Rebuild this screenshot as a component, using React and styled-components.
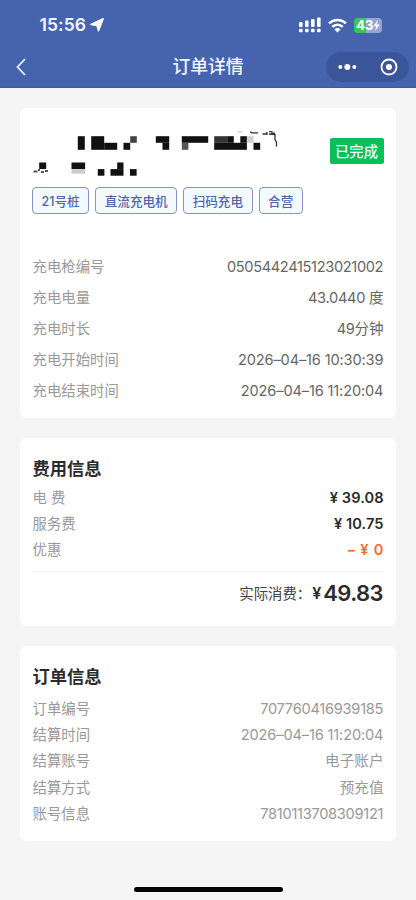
import React from 'react'
import styled, { createGlobalStyle } from 'styled-components'

const GlobalStyle = createGlobalStyle`
    * {
        box-sizing: border-box;
    }

    body {
        margin: 0;
        background-color: #f5f5f5;
        font-family: Inter, 'Noto Sans CJK SC', sans-serif;
    }
`;

const Page = styled.div`
    width: 416px;
    height: 900px;
    display: flex;
    flex-direction: column;
    overflow: hidden;
    background-color: #f5f5f5;
`;

const Header = styled.header`
    height: 88px;
    flex-shrink: 0;
    color: #f3f6ff;
    background-color: #4664ae;
    border-bottom: 1px solid #3c599f;
`;

const StatusBar = styled.div`
    height: 46px;
    padding: 4px 34px 0 39.5px;
    display: flex;
    align-items: center;
    justify-content: space-between;
`;

const StatusGroup = styled.div`
    display: flex;
    align-items: center;
    gap: ${props => props.$gap}px;
`;

const Time = styled.span`
    font-size: 17.5px;
    font-weight: 600;
    line-height: 22px;
    letter-spacing: 0.05px;
`;

const Battery = styled.div`
    width: 28px;
    height: 15px;
    display: flex;
    align-items: center;
    justify-content: center;
    border-radius: 4px;
    font-size: 13.5px;
    font-weight: 700;
    letter-spacing: -0.3px;
    color: #fff;
    background: linear-gradient(to right, #35c759 43%, #93a5d2 43%);
`;

const NavBar = styled.div`
    height: 42px;
    padding: 0 7px;
    display: grid;
    grid-template-columns: 1fr auto 1fr;
    align-items: center;
`;

const BackIcon = styled.svg`
    margin-left: 8px;
`;

const NavTitle = styled.h1`
    margin: 0;
    font-size: 17.8px;
    font-weight: 500;
    line-height: 26px;
`;

const Capsule = styled.div`
    width: 83px;
    height: 30px;
    padding: 0 11px 0 12px;
    display: flex;
    align-items: center;
    justify-content: space-between;
    justify-self: end;
    border-radius: 15px;
    background-color: #3b559b;
`;

const Content = styled.main`
    padding: 20px 20px 0;
    display: flex;
    flex-direction: column;
    gap: 20px;
`;

const Card = styled.section`
    height: ${props => props.$height}px;
    padding: ${props => props.$top}px 12.5px 0;
    border-radius: 7px;
    background-color: #fff;
`;

const Station = styled.div`
    height: 56px;
    display: flex;
    justify-content: space-between;
`;

const Badge = styled.span`
    width: 54px;
    height: 26px;
    margin-top: 7.5px;
    padding-bottom: 1px;
    display: flex;
    align-items: center;
    justify-content: center;
    border-radius: 2px;
    font-size: 14.3px;
    font-weight: 500;
    color: #f2fff6;
    background-color: #07c05a;
`;

const Tags = styled.div`
    margin: 0 0 37.7px -0.5px;
    display: flex;
    gap: 6px;
`;

const Tag = styled.span`
    height: 27px;
    padding: 0 8.5px;
    display: flex;
    align-items: center;
    border: 1.5px solid #8494c6;
    border-radius: 4px;
    font-size: 12.6px;
    font-weight: 500;
    color: #5067ab;
    background-color: #f5faff;
`;

const CardTitle = styled.h2`
    margin: 0 0 ${props => props.$gap}px;
    height: 30px;
    line-height: 30px;
    font-size: 17.3px;
    font-weight: 700;
    color: #2b2b2b;
`;

const Row = styled.div`
    height: ${props => props.$height}px;
    display: flex;
    align-items: center;
    justify-content: space-between;
    white-space: nowrap;
`;

const Label = styled.span`
    font-size: 14.4px;
    line-height: 20px;
    color: #999;
`;

const Value = styled.span`
    font-size: 14.6px;
    line-height: 20px;
    font-weight: ${props => props.$weight || 400};
    letter-spacing: ${props => props.$track || 0}px;
    margin-right: ${props => -(props.$track || 0)}px;
    color: ${props => props.$color || '#666'};
`;

const Divider = styled.div`
    height: 1px;
    margin-top: 7px;
    background-color: #f3f3f3;
`;

const Total = styled.div`
    height: 42px;
    display: flex;
    align-items: center;
    justify-content: flex-end;
`;

const TotalLabel = styled.span`
    font-size: 14.4px;
    color: #444;
`;

const Yen = styled.span`
    margin: 0 2px 0 1px;
    font-size: 16px;
    font-weight: 600;
    color: #2b2b2b;
`;

const Amount = styled.span`
    font-size: 22px;
    font-weight: 600;
    letter-spacing: -0.6px;
    margin-right: 0.6px;
    color: #2b2b2b;
`;

const HomeIndicator = styled.div`
    width: 149px;
    height: 5px;
    margin: auto auto 8px 134px;
    border-radius: 3px;
    background-color: #050505;
`;

const charge = [
    { label: '充电枪编号', value: '0505442415123021002', track: -0.35 },
    { label: '充电电量', value: '43.0440 度', track: -0.3 },
    { label: '充电时长', value: '49分钟', track: -0.3 },
    { label: '充电开始时间', value: '2026–04–16 10:30:39', track: -0.15 },
    { label: '充电结束时间', value: '2026–04–16 11:20:04', track: -0.15 },
]

const fees = [
    { label: '电 费', value: '¥ 39.08', color: '#2b2b2b', track: 0.05 },
    { label: '服务费', value: '¥ 10.75', color: '#2b2b2b', track: 0.05 },
    { label: '优惠', value: '– ¥ 0', color: '#f96a30', track: 0.8 },
]

const order = [
    { label: '订单编号', value: '707760416939185', track: -0.25 },
    { label: '结算时间', value: '2026–04–16 11:20:04', track: -0.15 },
    { label: '结算账号', value: '电子账户' },
    { label: '结算方式', value: '预充值' },
    { label: '账号信息', value: '7810113708309121', track: -0.28 },
]

// [x, y, width, height, colour] of each block hiding the station name
const blocks = [
    [44.8, 7.7, 7, 13.6, '#111'],
    [58.2, 7.7, 13, 13.6, '#111'],
    [71.2, 14.3, 13, 7, '#111'],
    [90.5, 14.3, 6.7, 7, '#111'],
    [97.2, 7.7, 6.6, 6.6, '#444'],
    [122.8, 7.7, 13.4, 6.6, '#111'],
    [129.5, 14.3, 6.7, 7, '#111'],
    [148.8, 7.7, 26.4, 6.6, '#111'],
    [148.8, 14.3, 6.6, 7, '#555'],
    [181.2, 7.7, 13, 6.6, '#333'],
    [194.2, 7.7, 6.6, 6.6, '#111'],
    [207.3, 7.7, 6.6, 6.6, '#111'],
    [181.2, 14.3, 32.7, 7, '#111'],
    [213.9, 7.7, 6.6, 6.6, '#d0d0d0'],
    [220.5, 14.3, 6.7, 7, '#111'],
    [6.2, 34, 7, 6.6, '#111'],
    [38.5, 34, 13.6, 6.6, '#111'],
    [38.5, 40.6, 13.6, 4.6, '#ccc'],
    [64.8, 40.6, 6.6, 6.6, '#111'],
    [77.5, 40.6, 13, 6.6, '#111'],
    [84.2, 34, 6.3, 6.6, '#111'],
    [97, 40.6, 6.6, 6.6, '#111'],
]

const Mosaic = () => (
    <svg width="260" height="56" viewBox="0 2.5 260 56">
        {blocks.map(([x, y, w, h, fill], i) => (
            <rect key={i} x={x} y={y} width={w} height={h} fill={fill} />
        ))}
        <g fill="none" stroke="#333" strokeWidth="1.3">
            <path d="M205 3.2h4" stroke="#ccc" />
            <path d="M217 3.2l2 1.2h6" />
            <path d="M229.5 5.5h5M234 3.5v3M236 3h3.5M236 5.5l6 .5v5l1.5 3v4" />
            <path d="M238 5h4" strokeWidth="2" />
            <path d="M0.5 43h4M5 41.5h2M8 43.5h3M12 42.5h3" strokeWidth="1.8" stroke="#555" />
        </g>
    </svg>
)

const App = () => {
    return (
        <Page>
            <GlobalStyle />
            <Header>
                <StatusBar>
                    <StatusGroup $gap={4}>
                        <Time>15:56</Time>
                        <svg width="14" height="14" viewBox="0 0 14 14" fill="#fff">
                            <path d="M13.2 0.8L8.5 12.8L7 7.6L1 6.4Z" stroke="#fff" strokeWidth="1.5" strokeLinejoin="round" />
                        </svg>
                    </StatusGroup>
                    <StatusGroup $gap={7}>
                        <svg width="22" height="16" viewBox="0 0 22 16" fill="#fff">
                            <rect x="0" y="5" width="3.6" height="5" rx="1" />
                            <rect x="6" y="3.5" width="3.6" height="6.5" rx="1" />
                            <rect x="12" y="2" width="3.6" height="8" rx="1" />
                            <rect x="18" y="0.5" width="3.6" height="9.5" rx="1" />
                            <rect x="0" y="11.8" width="3.6" height="3.5" rx="1" />
                            <rect x="6" y="11.8" width="3.6" height="3.5" rx="1" />
                            <rect x="12" y="11.8" width="3.6" height="3.5" rx="1" />
                            <rect x="18" y="11.8" width="3.6" height="3.5" rx="1" />
                        </svg>
                        <svg width="19" height="15" viewBox="0 0 18 14" fill="none" stroke="#fff" strokeWidth="2.5">
                            <path d="M1 5a11.5 11.5 0 0 1 16 0" />
                            <path d="M4 8.3a7.2 7.2 0 0 1 10 0" />
                            <path d="M6.1 10.7a4 4 0 0 1 5.8 0L9 13.7Z" fill="#fff" stroke="none" />
                        </svg>
                        <Battery>
                            43
                            <svg width="7" height="11" viewBox="0 0 7 11" fill="#fff">
                                <path d="M4.8 0L0.3 6.2H3.2L2.2 11L6.8 4.6H3.9Z" />
                            </svg>
                        </Battery>
                    </StatusGroup>
                </StatusBar>
                <NavBar>
                    <BackIcon width="12" height="18" viewBox="0 0 12 18" fill="none" stroke="#eef3ff" strokeWidth="1.8">
                        <path d="M10 1L2.5 9L10 17" />
                    </BackIcon>
                    <NavTitle>订单详情</NavTitle>
                    <Capsule>
                        <svg width="19" height="8" viewBox="0 0 19 8" fill="#fff">
                            <circle cx="2.3" cy="4" r="2" />
                            <circle cx="9.3" cy="4" r="3" />
                            <circle cx="16.3" cy="4" r="2" />
                        </svg>
                        <svg width="18" height="18" viewBox="0 0 18 18">
                            <circle cx="9" cy="9" r="7.5" fill="none" stroke="#fff" strokeWidth="1.8" />
                            <circle cx="9" cy="9" r="3" fill="#fff" />
                        </svg>
                    </Capsule>
                </NavBar>
            </Header>

            <Content>
                <Card $height={310} $top={22.5}>
                    <Station>
                        <Mosaic />
                        <Badge>已完成</Badge>
                    </Station>
                    <Tags>
                        <Tag>21号桩</Tag>
                        <Tag>直流充电机</Tag>
                        <Tag>扫码充电</Tag>
                        <Tag>合营</Tag>
                    </Tags>
                    {charge.map(item => (
                        <Row key={item.label} $height={31.1}>
                            <Label>{item.label}</Label>
                            <Value $track={item.track}>{item.value}</Value>
                        </Row>
                    ))}
                </Card>

                <Card $height={188} $top={16}>
                    <CardTitle $gap={1}>费用信息</CardTitle>
                    {fees.map(item => (
                        <Row key={item.label} $height={26.2}>
                            <Label>{item.label}</Label>
                            <Value $weight={600} $color={item.color} $track={item.track}>{item.value}</Value>
                        </Row>
                    ))}
                    <Divider />
                    <Total>
                        <TotalLabel>实际消费：</TotalLabel>
                        <Yen>¥</Yen>
                        <Amount>49.83</Amount>
                    </Total>
                </Card>

                <Card $height={195} $top={16}>
                    <CardTitle $gap={3.6}>订单信息</CardTitle>
                    {order.map(item => (
                        <Row key={item.label} $height={26.3}>
                            <Label>{item.label}</Label>
                            <Value $color="#999" $track={item.track}>{item.value}</Value>
                        </Row>
                    ))}
                </Card>
            </Content>
            <HomeIndicator />
        </Page>
    )
}

export default App
